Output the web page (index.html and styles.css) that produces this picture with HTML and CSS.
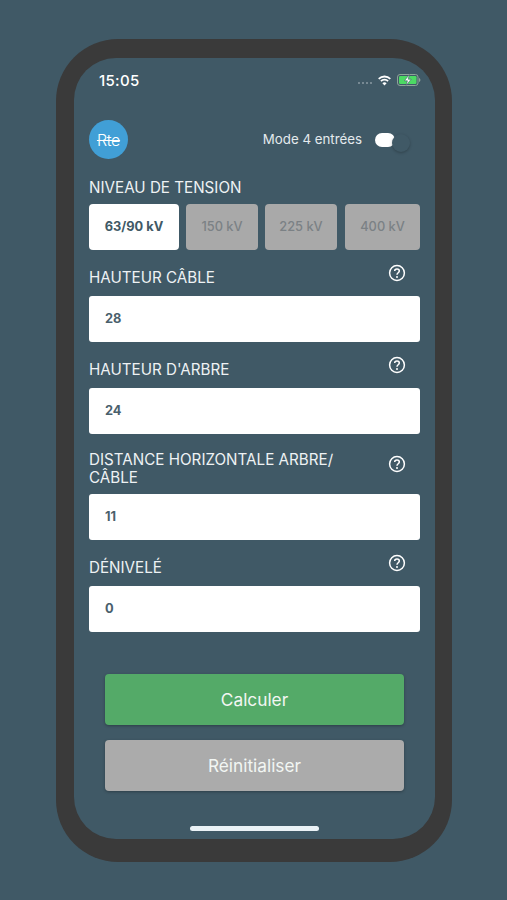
FILE: index.html
```html
<!DOCTYPE html>
<html lang="fr">
<head>
  <meta charset="UTF-8" />
  <meta name="viewport" content="width=device-width, initial-scale=1.0"/>
  <title>Calcul distance arbre</title>
  <link rel="stylesheet" href="styles.css">
</head>
<body>
  <div class="phone">
    <div class="screen">
      <div class="status-bar">
        <span class="time">15:05</span>
        <div class="status-icons">
          <span class="cell-dots"><i></i><i></i><i></i><i></i></span>
          <svg class="wifi" width="15" height="11" viewBox="0 0 15 11">
            <path d="M7.5 2.4c2 0 3.8.8 5.2 2.1l1.2-1.3A9.300 9.300 0 0 0 7.500.6 9.300 9.300 0 0 0 1.100 3.200l1.200 1.300A7.500 7.500 0 0 1 7.500 2.400z" fill="#fff"/>
            <path d="M7.500 5.500c1.200 0 2.200.4 3 1.200l1.200-1.300a6.100 6.100 0 0 0-8.400 0l1.200 1.300c.8-.8 1.800-1.200 3-1.200z" fill="#fff"/>
            <path d="M7.500 10.600 9.600 8.300a3 3 0 0 0-4.200 0z" fill="#fff"/>
          </svg>
          <svg class="battery" width="24" height="12" viewBox="0 0 24 12">
            <rect x="0.500" y="0.500" width="20.500" height="11" rx="2.500" fill="none" stroke="#8fa39a"/>
            <rect x="2" y="2" width="17.500" height="8" rx="1.200" fill="#4cd964"/>
            <path d="M22 4v4c.8-.2 1.400-1 1.400-2s-.6-1.800-1.400-2z" fill="#8fa39a"/>
            <path d="M12.400.6 7.400 6.800h3l-1.200 4.600 5-6.200h-3z" fill="#fff" stroke="#405966" stroke-width="0.600"/>
          </svg>
        </div>
      </div>

      <div class="header">
        <div class="logo"><span>Rte</span></div>
        <div class="mode">
          <span>Mode 4 entrées</span>
          <div class="toggle"><span class="toggle-knob"></span></div>
        </div>
      </div>

      <div class="voltage-label">Niveau de tension</div>
      <div class="voltage-row">
        <button class="volt active">63/90 kV</button>
        <button class="volt">150 kV</button>
        <button class="volt">225 kV</button>
        <button class="volt wide">400 kV</button>
      </div>

      <div class="field">
        <div class="field-head">
          <label>Hauteur câble</label>
          <svg class="help" width="18" height="18" viewBox="0 0 18 18"><circle cx="9" cy="9" r="7.400"/><path d="M6.700 7.100c0-1.300 1-2.100 2.300-2.100s2.300.8 2.300 2c0 1.800-2.300 1.700-2.300 3.700"/><circle class="dot" cx="9" cy="13" r="1"/></svg>
        </div>
        <input type="text" value="28" />
      </div>

      <div class="field">
        <div class="field-head">
          <label>Hauteur d'arbre</label>
          <svg class="help" width="18" height="18" viewBox="0 0 18 18"><circle cx="9" cy="9" r="7.400"/><path d="M6.700 7.100c0-1.300 1-2.100 2.300-2.100s2.300.8 2.300 2c0 1.800-2.300 1.700-2.300 3.700"/><circle class="dot" cx="9" cy="13" r="1"/></svg>
        </div>
        <input type="text" value="24" />
      </div>

      <div class="field">
        <div class="field-head two-lines">
          <label>Distance horizontale arbre/ câble</label>
          <svg class="help" width="18" height="18" viewBox="0 0 18 18"><circle cx="9" cy="9" r="7.400"/><path d="M6.700 7.100c0-1.300 1-2.100 2.300-2.100s2.300.8 2.300 2c0 1.800-2.300 1.700-2.300 3.700"/><circle class="dot" cx="9" cy="13" r="1"/></svg>
        </div>
        <input type="text" value="11" />
      </div>

      <div class="field">
        <div class="field-head">
          <label>Dénivelé</label>
          <svg class="help" width="18" height="18" viewBox="0 0 18 18"><circle cx="9" cy="9" r="7.400"/><path d="M6.700 7.100c0-1.300 1-2.100 2.300-2.100s2.300.8 2.300 2c0 1.800-2.300 1.700-2.300 3.700"/><circle class="dot" cx="9" cy="13" r="1"/></svg>
        </div>
        <input type="text" value="0" />
      </div>

      <div class="actions">
        <button class="action green">Calculer</button>
        <button class="action grey">Réinitialiser</button>
      </div>

      <div class="home-bar"></div>
    </div>
  </div>
</body>
</html>
```

FILE: styles.css
```css
* {
  box-sizing: border-box;
}

body {
  font-family: 'Inter', 'Liberation Sans', sans-serif;
  background: #405966;
  color: #fff;
  margin: 0;
  padding: 39px 0 0 56px;
}

.phone {
  width: 396px;
  height: 823px;
  padding: 19px 17px 23px 18px;
  background: #3a3a3a;
  border-radius: 62px;
}

.screen {
  height: 781px;
  padding: 0 15px;
  background: #405966;
  border-radius: 42px;
  display: flex;
  flex-direction: column;
}

.status-bar {
  height: 46px;
  padding: 0 0 0 10px;
  display: flex;
  justify-content: space-between;
  align-items: flex-end;
}

.time {
  font-size: 15px;
  font-weight: 500;
  letter-spacing: 0.3px;
  line-height: 18px;
  margin-bottom: 14px;
}

.status-icons {
  display: flex;
  align-items: center;
  gap: 5px;
  margin: 0 -1px 18px 0;
}

.cell-dots {
  display: flex;
  gap: 2px;
  margin: 5px 0 0 0;
}

.cell-dots i {
  width: 2px;
  height: 2px;
  border-radius: 50%;
  background: #8a9aa3;
}

.header {
  margin-top: 16px;
  display: flex;
  justify-content: space-between;
  align-items: center;
}

.logo {
  width: 39px;
  height: 39px;
  border-radius: 50%;
  background: #419fd6;
  display: flex;
  align-items: center;
  justify-content: center;
}

.logo span {
  font-size: 16px;
  font-weight: 300;
  letter-spacing: -0.3px;
  text-decoration: line-through;
  text-decoration-thickness: 1px;
}

.mode {
  display: flex;
  align-items: center;
  gap: 13px;
  margin-right: 10px;
  font-size: 13.300px;
  color: #e4eaed;
}

.mode span:first-child {
  margin-bottom: 2px;
}

.toggle {
  position: relative;
  width: 35px;
  height: 14px;
}

.toggle::before {
  content: "";
  display: block;
  width: 20px;
  height: 14px;
  background: #fff;
  border-radius: 7px;
}

.toggle-knob {
  position: absolute;
  right: 0;
  top: 1px;
  width: 18px;
  height: 18px;
  border-radius: 50%;
  background: #405966;
  box-shadow: 0 1px 3px rgba(0,0,0,0.25);
}

.voltage-label {
  margin-top: 20px;
  font-size: 15.200px;
  line-height: 18px;
  text-transform: uppercase;
  color: #eef2f4;
}

.voltage-row {
  margin-top: 7px;
  display: flex;
  gap: 7px;
}

.volt {
  width: 72px;
  height: 46px;
  padding: 0 0 2px;
  border: none;
  border-radius: 4px;
  background: #a9a9a9;
  color: #7b8185;
  font-family: inherit;
  font-size: 12.800px;
  font-weight: 500;
}

.volt.active {
  width: 90px;
  background: #fff;
  color: #405966;
  font-weight: 700;
}

.volt.wide {
  width: 75px;
  margin-left: 1px;
}

.field-head {
  padding: 19px 0 9px;
  display: flex;
  align-items: center;
  justify-content: space-between;
}

.field-head.two-lines {
  padding: 17px 0 7px;
}

.field-head label {
  flex: 1;
  padding-right: 40px;
  font-size: 15.200px;
  line-height: 18px;
  text-transform: uppercase;
  color: #eef2f4;
}

.help {
  flex-shrink: 0;
  margin: -5px 14px 5px 0;
  fill: none;
  stroke: #fff;
  stroke-width: 1.500;
}

.help .dot {
  fill: #fff;
  stroke: none;
}

.field input {
  display: block;
  width: 100%;
  height: 46px;
  padding: 0 16px 2px;
  border: none;
  border-radius: 3px;
  background: #fff;
  color: #4a606c;
  font-family: inherit;
  font-size: 12.800px;
  font-weight: 700;
}

.actions {
  margin: 42px 16px 0;
  display: flex;
  flex-direction: column;
  gap: 15px;
}

.action {
  height: 51px;
  border: none;
  border-radius: 4px;
  color: #f2f6f3;
  font-family: inherit;
  font-size: 17.300px;
  box-shadow: 0 1px 3px rgba(0,0,0,0.3);
}

.green {
  background: #54aa68;
}

.grey {
  background: #ababab;
}

.home-bar {
  width: 129px;
  height: 5px;
  margin: 35px auto 0;
  border-radius: 3px;
  background: #eaf2f6;
}
```
